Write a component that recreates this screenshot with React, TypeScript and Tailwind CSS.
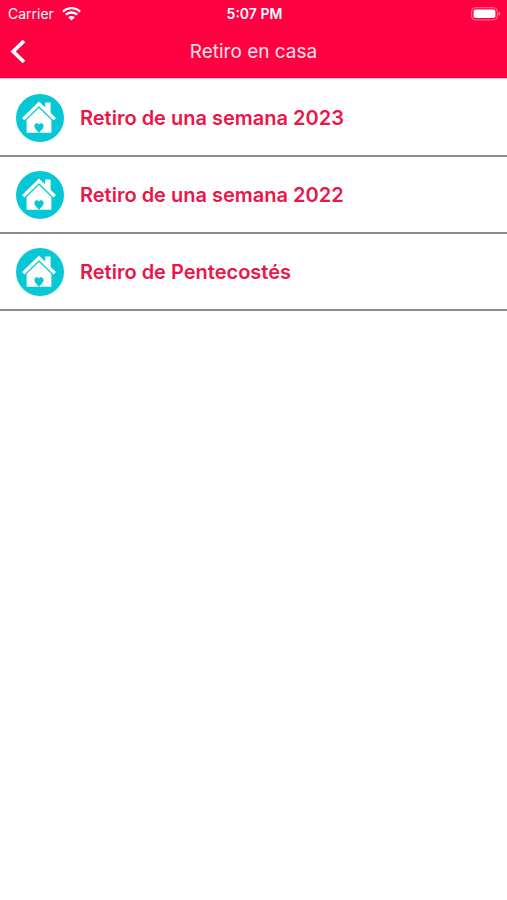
type Retreat = {
  id: number;
  title: string;
};

const retreats: Retreat[] = [
  { id: 1, title: "Retiro de una semana 2023" },
  { id: 2, title: "Retiro de una semana 2022" },
  { id: 3, title: "Retiro de Pentecostés" },
];

const WifiIcon = () => (
  <svg width="19" height="14" viewBox="0 0 19 14" fill="none" aria-hidden="true">
    <path
      d="M.9 4.6C5.6 0 13.4 0 18.1 4.6M3.8 7.7c3.2-3 8.2-3 11.4 0"
      stroke="#fff"
      strokeWidth="2.4"
    />
    <path d="M6.2 10.2c1.9-1.7 4.7-1.7 6.6 0L9.5 13.4z" fill="#fff" />
  </svg>
);

const BatteryIcon = () => (
  <svg width="30" height="14" viewBox="0 0 30 14" fill="none" aria-hidden="true">
    <rect x="0.7" y="0.7" width="25.6" height="12.2" rx="3.6" stroke="#fff" strokeOpacity="0.45" />
    <rect x="2.6" y="2.6" width="21.8" height="8.4" rx="1.8" fill="#fff" />
    <path d="M27.6 4.8c2 .8 2 3.4 0 4.2z" fill="#fff" fillOpacity="0.6" />
  </svg>
);

const BackIcon = () => (
  <svg width="16" height="26" viewBox="0 0 16 26" fill="none" aria-hidden="true">
    <path d="M14 2 3.2 12.5 14 23" stroke="#fff" strokeWidth="3.8" />
  </svg>
);

const HouseIcon = () => (
  <svg
    className="shrink-0"
    width="48"
    height="48"
    viewBox="0 0 48 48"
    fill="none"
    aria-hidden="true"
  >
    <circle cx="24" cy="24" r="24" fill="#06c7d4" />
    {/* Chimney and roof */}
    <path d="M29.2 8.6h5.4V21l-5.4-5z" fill="#fff" />
    <path d="M7.2 25.2 23 9.9l15.8 15.3" stroke="#fff" strokeWidth="3.3" />
    {/* Walls */}
    <path d="M23 14 35.4 26v12.8H10.6V26z" fill="#fff" />
    {/* Heart */}
    <path
      d="M23 38.9c-1.4-2.4-4.6-4.2-4.6-7 0-3 3.6-3.6 4.6-1.2 1-2.4 4.6-1.8 4.6 1.2 0 2.8-3.2 4.6-4.6 7z"
      fill="#06c7d4"
    />
  </svg>
);

const StatusBar = () => (
  <div className="grid h-7 grid-cols-3 items-center pl-2 pr-1.5 text-sm text-white">
    <div className="flex items-center gap-2">
      <span>Carrier</span>
      <WifiIcon />
    </div>
    <span className="text-center font-semibold">5:07 PM</span>
    <div className="flex justify-end">
      <BatteryIcon />
    </div>
  </div>
);

const Header = () => (
  <header className="border-b border-[#f7c4d0] bg-[#ff0040]">
    <StatusBar />
    <div className="grid h-[50px] grid-cols-[40px_1fr_40px] items-start">
      <button type="button" aria-label="Volver" className="flex h-12 items-center pl-2.5">
        <BackIcon />
      </button>
      <h1 className="text-center text-[19px] leading-[48px] text-[#ffe3ea]">Retiro en casa</h1>
    </div>
  </header>
);

const App = () => {
  return (
    <div className="min-h-screen bg-white font-['Inter',sans-serif]">
      <Header />
      <main>
        <ul className="pt-px">
          {retreats.map((retreat) => (
            <li key={retreat.id} className="border-b-2 border-[#8c8c8c]">
              <button
                type="button"
                className="flex h-[75px] w-full items-center gap-4 px-4 text-left"
              >
                <HouseIcon />
                <span className="text-xl font-semibold text-[#ec1549]">{retreat.title}</span>
              </button>
            </li>
          ))}
        </ul>
      </main>
    </div>
  );
};

export default App;
